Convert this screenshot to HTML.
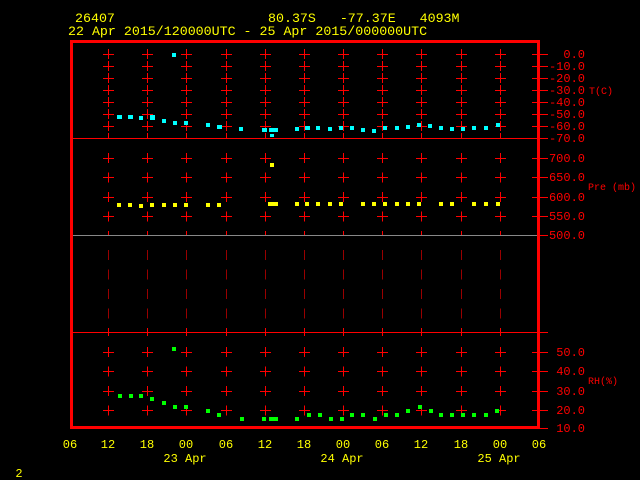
<!DOCTYPE html>
<html><head><meta charset="utf-8"><style>
html,body{margin:0;padding:0;background:#000;width:640px;height:480px;overflow:hidden}
svg{display:block}
text{font-family:"Liberation Mono",monospace;white-space:pre}
</style></head><body>
<svg width="640" height="480" xmlns="http://www.w3.org/2000/svg" xmlns:xlink="http://www.w3.org/1999/xlink">
<defs>
<g id="a" stroke="#f00" stroke-width="1" fill="none">
<path d="M0.5 49V138" stroke-dasharray="10 2"/>
<path d="M-5 54.5h11M-5 66.5h11M-5 78.5h11M-5 90.5h11M-5 102.5h11M-5 114.5h11M-5 126.5h11"/>
<path d="M0.5 153V235" stroke-dasharray="10 9.5"/>
<path d="M-5 158.5h11M-5 177.5h11M-5 197.5h11M-5 216.5h11"/>
<path d="M0.5 250V332" stroke="#900" stroke-dasharray="10 9.5"/>
<path d="M0.5 328V336M0.5 347V418" stroke-dasharray="10 9.5"/>
<path d="M-5 352.5h11M-5 371.5h11M-5 391.5h11M-5 410.5h11"/>
</g>
</defs>
<g font-size="13.3" fill="#ff0">
<text x="75" y="22" xml:space="preserve">26407</text>
<text x="268" y="22" xml:space="preserve">80.37S   -77.37E   4093M</text>
<text x="68" y="35" xml:space="preserve">22 Apr 2015/120000UTC - 25 Apr 2015/000000UTC</text>
</g>
<use xlink:href="#a" x="108"/><use xlink:href="#a" x="147"/><use xlink:href="#a" x="186"/>
<use xlink:href="#a" x="226"/><use xlink:href="#a" x="265"/><use xlink:href="#a" x="304"/>
<use xlink:href="#a" x="343"/><use xlink:href="#a" x="382"/><use xlink:href="#a" x="421"/>
<use xlink:href="#a" x="461"/><use xlink:href="#a" x="500"/>
<path d="M72 138.5H548M72 332.5H548" stroke="#f00"/>
<path d="M72 235.5H538" stroke="#888"/>
<path d="M548 235.5H538" stroke="#f00"/>
<rect x="71.5" y="41.5" width="467" height="386" fill="none" stroke="#f00" stroke-width="3"/>
<path stroke="#f00" d="M532 54.5h16M532 66.5h16M532 78.5h16M532 90.5h16M532 102.5h16M532 114.5h16M532 126.5h16M532 158.5h16M532 177.5h16M532 197.5h16M532 216.5h16M532 352.5h16M532 371.5h16M532 391.5h16M532 410.5h16M532 428.5h16"/>
<g font-size="12" fill="#f00" text-anchor="end">
<text x="585" y="58">0.0</text><text x="585" y="70">-10.0</text><text x="585" y="82">-20.0</text>
<text x="585" y="94">-30.0</text><text x="585" y="106">-40.0</text><text x="585" y="118">-50.0</text>
<text x="585" y="130">-60.0</text><text x="585" y="142">-70.0</text>
<text x="585" y="162">700.0</text><text x="585" y="181">650.0</text><text x="585" y="201">600.0</text>
<text x="585" y="220">550.0</text><text x="585" y="239">500.0</text>
<text x="585" y="356">50.0</text><text x="585" y="375">40.0</text><text x="585" y="395">30.0</text>
<text x="585" y="414">20.0</text><text x="585" y="432">10.0</text>
</g>
<g font-size="10" fill="#f00">
<text x="589" y="94">T(C)</text>
<text x="588" y="190" xml:space="preserve">Pre (mb)</text>
<text x="588" y="384">RH(%)</text>
</g>
<g font-size="12" fill="#ff0" text-anchor="middle">
<text x="70" y="448">06</text><text x="108" y="448">12</text><text x="147" y="448">18</text>
<text x="186" y="448">00</text><text x="226" y="448">06</text><text x="265" y="448">12</text>
<text x="304" y="448">18</text><text x="343" y="448">00</text><text x="382" y="448">06</text>
<text x="421" y="448">12</text><text x="461" y="448">18</text><text x="500" y="448">00</text>
<text x="539" y="448">06</text>
<text x="185" y="462">23 Apr</text><text x="342" y="462">24 Apr</text><text x="499" y="462">25 Apr</text>
<text x="19" y="477">2</text>
</g>
<g fill="#0ff">
<rect x="172" y="53" width="4" height="4"/>
<rect x="117" y="115" width="5" height="4"/><rect x="128" y="115" width="5" height="4"/><rect x="139" y="116" width="4" height="4"/>
<rect x="150" y="115" width="5" height="5"/><rect x="162" y="119" width="4" height="4"/><rect x="173" y="121" width="4" height="4"/>
<rect x="184" y="121" width="4" height="4"/><rect x="206" y="123" width="4" height="4"/><rect x="217" y="125" width="5" height="4"/>
<rect x="239" y="127" width="4" height="4"/><rect x="262" y="128" width="5" height="4"/><rect x="269" y="128" width="9" height="4"/>
<rect x="270" y="134" width="4" height="3"/><rect x="295" y="127" width="4" height="4"/><rect x="305" y="126" width="5" height="4"/>
<rect x="316" y="126" width="4" height="4"/><rect x="328" y="127" width="4" height="4"/><rect x="339" y="126" width="4" height="4"/>
<rect x="350" y="126" width="4" height="4"/><rect x="361" y="128" width="4" height="4"/><rect x="372" y="129" width="4" height="4"/>
<rect x="383" y="126" width="4" height="4"/><rect x="395" y="126" width="4" height="4"/><rect x="406" y="125" width="4" height="4"/>
<rect x="417" y="123" width="4" height="4"/><rect x="428" y="124" width="4" height="4"/><rect x="439" y="126" width="4" height="4"/>
<rect x="450" y="127" width="4" height="4"/><rect x="461" y="127" width="4" height="4"/><rect x="472" y="126" width="4" height="4"/>
<rect x="484" y="126" width="4" height="4"/><rect x="496" y="123" width="4" height="4"/>
</g>
<g fill="#ff0">
<rect x="270" y="163" width="4" height="4"/>
<rect x="117" y="203" width="4" height="4"/><rect x="128" y="203" width="4" height="4"/><rect x="139" y="204" width="4" height="4"/>
<rect x="150" y="203" width="4" height="4"/><rect x="162" y="203" width="4" height="4"/><rect x="173" y="203" width="4" height="4"/>
<rect x="184" y="203" width="4" height="4"/><rect x="206" y="203" width="4" height="4"/><rect x="217" y="203" width="4" height="4"/>
<rect x="268" y="202" width="10" height="4"/><rect x="295" y="202" width="4" height="4"/><rect x="305" y="202" width="4" height="4"/>
<rect x="316" y="202" width="4" height="4"/><rect x="328" y="202" width="4" height="4"/><rect x="339" y="202" width="4" height="4"/>
<rect x="361" y="202" width="4" height="4"/><rect x="372" y="202" width="4" height="4"/><rect x="383" y="202" width="4" height="4"/>
<rect x="395" y="202" width="4" height="4"/><rect x="406" y="202" width="4" height="4"/><rect x="417" y="202" width="4" height="4"/>
<rect x="439" y="202" width="4" height="4"/><rect x="450" y="202" width="4" height="4"/><rect x="472" y="202" width="4" height="4"/>
<rect x="484" y="202" width="4" height="4"/><rect x="496" y="202" width="4" height="4"/>
</g>
<g fill="#0f0">
<rect x="172" y="347" width="4" height="4"/>
<rect x="118" y="394" width="4" height="4"/><rect x="129" y="394" width="4" height="4"/><rect x="139" y="394" width="4" height="4"/>
<rect x="150" y="397" width="4" height="4"/><rect x="162" y="401" width="4" height="4"/><rect x="173" y="405" width="4" height="4"/>
<rect x="184" y="405" width="4" height="4"/><rect x="206" y="409" width="4" height="4"/><rect x="217" y="413" width="4" height="4"/>
<rect x="240" y="417" width="4" height="4"/><rect x="262" y="417" width="4" height="4"/><rect x="269" y="417" width="9" height="4"/>
<rect x="295" y="417" width="4" height="4"/><rect x="307" y="413" width="4" height="4"/><rect x="318" y="413" width="4" height="4"/>
<rect x="329" y="417" width="4" height="4"/><rect x="340" y="417" width="4" height="4"/><rect x="350" y="413" width="4" height="4"/>
<rect x="361" y="413" width="4" height="4"/><rect x="373" y="417" width="4" height="4"/><rect x="384" y="413" width="4" height="4"/>
<rect x="395" y="413" width="4" height="4"/><rect x="406" y="409" width="4" height="4"/><rect x="418" y="405" width="4" height="4"/>
<rect x="429" y="409" width="4" height="4"/><rect x="439" y="413" width="4" height="4"/><rect x="450" y="413" width="4" height="4"/>
<rect x="461" y="413" width="4" height="4"/><rect x="472" y="413" width="4" height="4"/><rect x="484" y="413" width="4" height="4"/>
<rect x="495" y="409" width="4" height="4"/>
</g>
</svg>
</body></html>
